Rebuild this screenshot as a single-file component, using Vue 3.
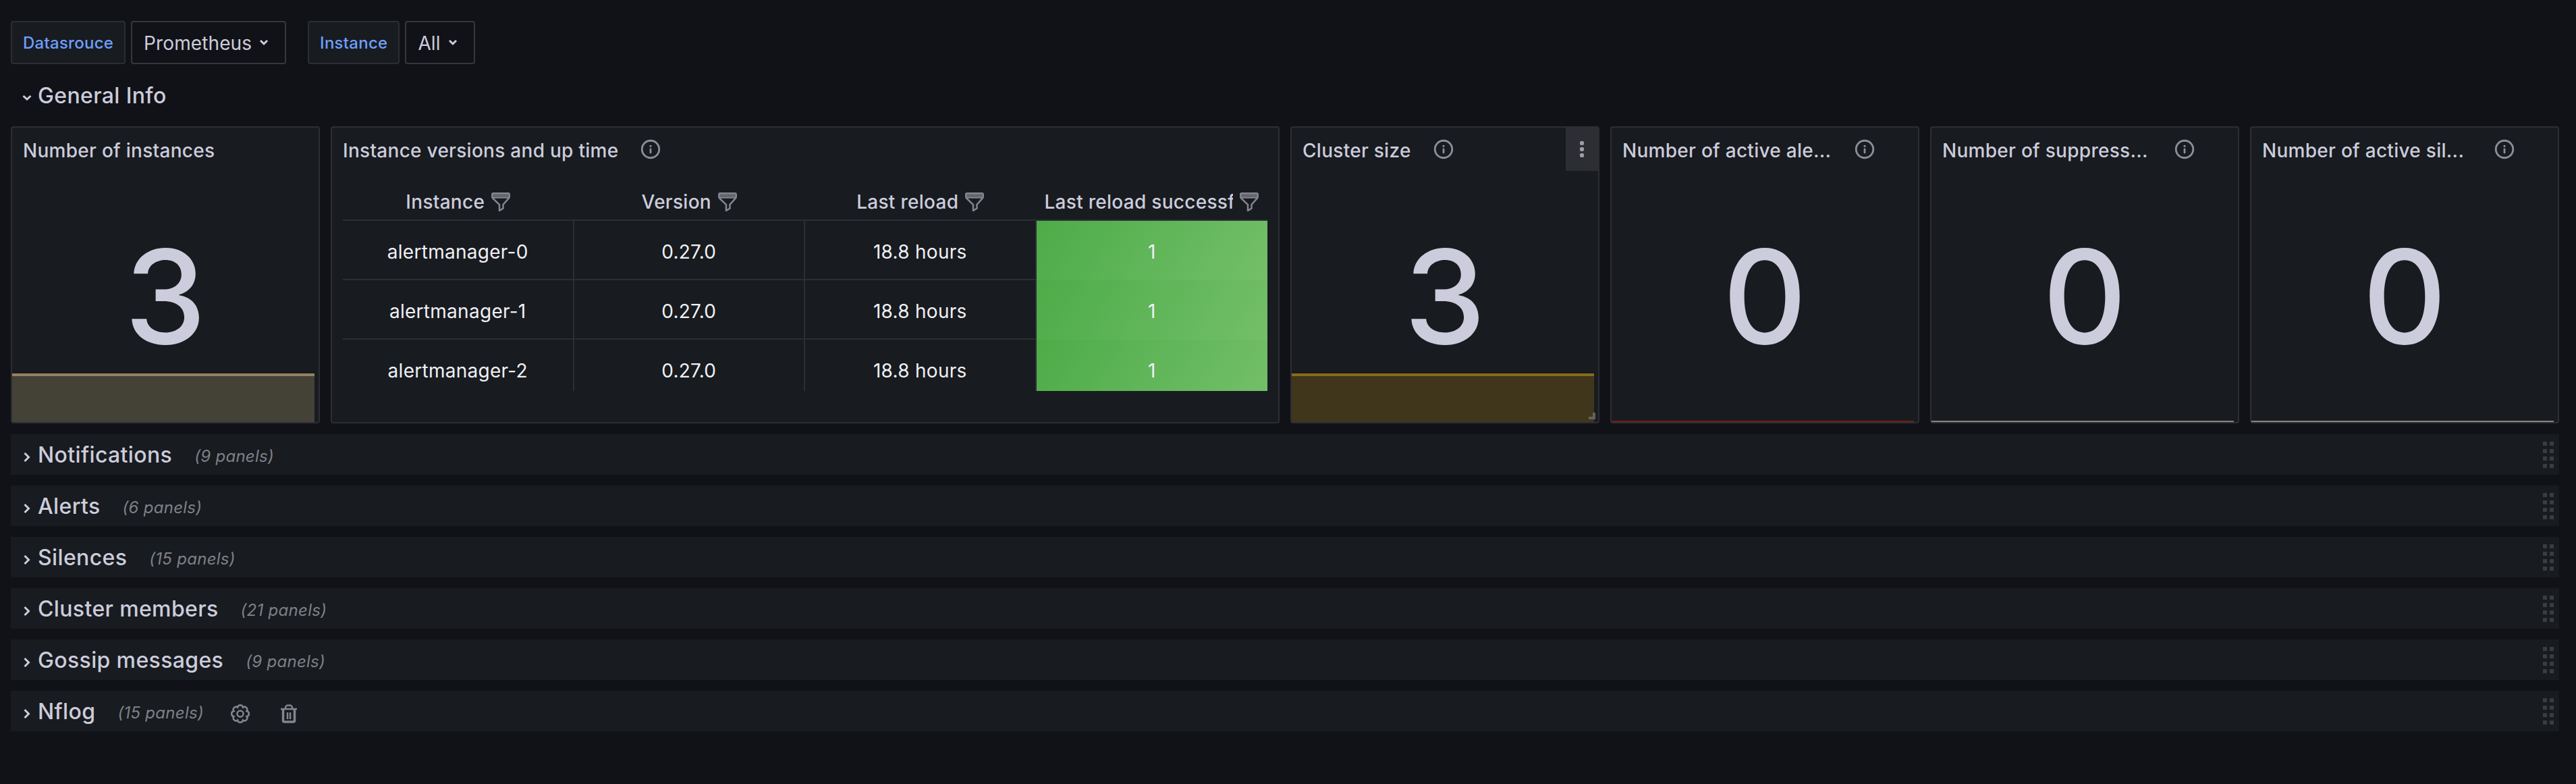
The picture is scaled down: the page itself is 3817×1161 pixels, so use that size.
<script setup>
import { ref } from "vue";

const variables = ref([
  { label: "Datasrouce", value: "Prometheus" },
  { label: "Instance", value: "All" },
]);

const infoPath = "M12 2a10 10 0 1 0 0 20 10 10 0 0 0 0-20Zm0 18a8 8 0 1 1 0-16 8 8 0 0 1 0 16Zm0-9a1 1 0 0 0-1 1v3.5a1 1 0 0 0 2 0v-3.5a1 1 0 0 0-1-1Zm0-3.500a1.200 1.200 0 1 0 0 2.400a1.200 1.200 0 0 0 0-2.400Z";

// Gear outline: eight bumps joined around a circle
const gearPath = (() => {
  let d = "";
  for (let i = 0; i <= 8; i++) {
    const a = ((i * 45 + 22.5) * Math.PI) / 180;
    const x = (14 + 10.3 * Math.cos(a)).toFixed(2);
    const y = (16 + 10.3 * Math.sin(a)).toFixed(2);
    d += i === 0 ? `M${x} ${y}` : `A4 4 0 0 1 ${x} ${y}`;
  }
  return d + "Z";
})();

const columns = ["Instance", "Version", "Last reload", "Last reload successful"];
const instances = ref([
  { name: "alertmanager-0", version: "0.27.0", reload: "18.8 hours", ok: 1 },
  { name: "alertmanager-1", version: "0.27.0", reload: "18.8 hours", ok: 1 },
  { name: "alertmanager-2", version: "0.27.0", reload: "18.8 hours", ok: 1 },
]);

const stats = ref([
  { title: "Number of instances", value: 3, color: "sand" },
  { title: "Cluster size", value: 3, color: "gold", info: true, active: true },
  { title: "Number of active alerts", short: "Number of active ale...", value: 0, color: "red", info: true },
  { title: "Number of suppressed alerts", short: "Number of suppress...", value: 0, color: "grey", info: true },
  { title: "Number of active silences", short: "Number of active sil...", value: 0, color: "grey", info: true },
]);

const rows = ref([
  { title: "Notifications", panels: 9 },
  { title: "Alerts", panels: 6 },
  { title: "Silences", panels: 15 },
  { title: "Cluster members", panels: 21 },
  { title: "Gossip messages", panels: 9 },
  { title: "Nflog", panels: 15, actions: true },
]);
</script>

<template>
  <div class="dashboard">
    <div class="submenu">
      <div class="variable" v-for="v in variables" :key="v.label">
        <label class="variable-label">{{ v.label }}</label>
        <button class="variable-value">
          <span>{{ v.value }}</span>
          <svg class="caret" viewBox="0 0 14 12"><path d="M2 3l5 5 5-5" /></svg>
        </button>
      </div>
    </div>

    <div class="row-open">
      <svg class="chevron" viewBox="0 0 14 12"><path d="M1.500 3l5.500 5 5.500-5" /></svg>
      <span class="row-title">General Info</span>
    </div>

    <div class="panels">
      <section class="panel stat" v-for="(s, i) in stats" :key="s.title" :class="[s.color, { first: i === 0 }]">
        <header class="panel-header">
          <h2 :class="{ truncated: s.short }">{{ s.short || s.title }}</h2>
          <svg v-if="s.info" class="info" viewBox="0 0 24 24"><path :d="infoPath" /></svg>
          <button v-if="s.active" class="menu"><i></i><i></i><i></i></button>
        </header>
        <div class="value">{{ s.value }}</div>
        <div class="spark" :class="{ flat: s.value === 0 }"></div>
        <span v-if="s.active" class="resize"></span>
      </section>

      <section class="panel versions">
        <header class="panel-header">
          <h2>Instance versions and up time</h2>
          <svg class="info" viewBox="0 0 24 24"><path :d="infoPath" /></svg>
        </header>
        <div class="table">
          <div class="tr th">
            <div class="td" v-for="c in columns" :key="c">
              <span class="name">{{ c }}</span>
              <svg class="filter" viewBox="0 0 28 28">
                <path class="band" d="M2 1h24v5H2z" />
                <path d="M3 1.200h22a1.800 1.800 0 0 1 1.800 1.800v3c0 1-.4 1.900-1 2.600L17.500 18v5.500L12 27v-9L2.200 8.600A3.700 3.700 0 0 1 1.200 6V3A1.800 1.800 0 0 1 3 1.200ZM2 7.500h24" />
              </svg>
            </div>
          </div>
          <div class="tbody">
            <div class="tr" v-for="r in instances" :key="r.name">
              <div class="td">{{ r.name }}</div>
              <div class="td">{{ r.version }}</div>
              <div class="td">{{ r.reload }}</div>
              <div class="td ok">{{ r.ok }}</div>
            </div>
          </div>
        </div>
      </section>
    </div>

    <div class="row" v-for="r in rows" :key="r.title">
      <svg class="chevron" viewBox="0 0 10 18"><path d="M1.500 3l6 6-6 6" /></svg>
      <span class="row-title">{{ r.title }}</span>
      <span class="count">({{ r.panels }} panels)</span>
      <template v-if="r.actions">
        <svg class="gear" viewBox="0 0 28 32">
          <path :d="gearPath" />
          <circle cx="14" cy="16" r="4.500" />
        </svg>
        <svg class="trash" viewBox="0 0 24 32">
          <path d="M0 9h24M7 8V7a3.500 3.500 0 0 1 3.500-3.500h3A3.500 3.500 0 0 1 17 7v1M10 14v10M14 14v10" />
          <path class="bin" d="M3.500 9v17a2 2 0 0 0 2 2h13a2 2 0 0 0 2-2V9" />
        </svg>
      </template>
      <div class="drag"><i v-for="n in 8" :key="n"></i></div>
    </div>
  </div>
</template>

<style>
body {
  background: #111217;
}
</style>

<style scoped>
.dashboard {
  box-sizing: border-box;
  width: 3808px;
  height: 1161px;
  padding: 31px 16px 0;
  background: #111217;
  color: #ccccdc;
  font-family: Inter, "Liberation Sans", sans-serif;
  font-size: 28px;
  line-height: 44px;
  letter-spacing: 0.28px;
}
.dashboard * {
  box-sizing: border-box;
}
svg {
  flex: none;
  fill: none;
  stroke: currentColor;
  stroke-width: 2.5;
}
button {
  padding: 0;
  border: 0;
  color: inherit;
  font: inherit;
  letter-spacing: inherit;
}
.submenu {
  display: flex;
  gap: 32px;
  height: 64px;
}
.variable {
  display: flex;
  gap: 8px;
}
.variable-label,
.variable-value {
  display: flex;
  align-items: center;
  height: 64px;
  padding: 2px 16px 0;
  border: 2px solid #2d2e34;
  border-radius: 4px;
}
.variable-label {
  background: #181b1f;
  color: #6e9fff;
  font-size: 24px;
  font-weight: 500;
  letter-spacing: 0.26px;
}
.variable-value {
  background: #111217;
  border-color: #36373d;
  padding: 2px 24px 0 17px;
  letter-spacing: 0.1px;
}
.caret,
.row-open .chevron {
  width: 14px;
  height: 12px;
  stroke-width: 3;
}
.caret {
  margin-left: 11px;
  margin-top: -2px;
}

.row-open {
  display: flex;
  align-items: center;
  height: 60px;
  margin-top: 16px;
  padding-left: 17px;
}
.row-open .chevron {
  margin-top: 7px;
  margin-right: 9px;
}
.row-title {
  padding-top: 2px;
  font-size: 32px;
  font-weight: 500;
  letter-spacing: 0.36px;
}

.panels {
  display: grid;
  grid-template-columns: 458px 1406px repeat(4, 458px);
  grid-template-rows: 440px;
  gap: 16px;
  margin-top: 16px;
  margin-bottom: 16px;
}
.panel {
  position: relative;
  display: flex;
  flex-direction: column;
  grid-row: 1;
  border: 2px solid #2d2e34;
  border-radius: 4px;
  background: #181b1f;
}
.first {
  grid-column: 1;
}
.versions {
  grid-column: 2;
}
.panel-header {
  display: flex;
  align-items: center;
  height: 64px;
  padding-left: 16px;
}
h2 {
  margin: 0;
  padding-top: 3px;
  font-size: 28px;
  font-weight: 500;
  white-space: nowrap;
}
.truncated {
  width: 311px;
}
.info {
  width: 34px;
  height: 34px;
  margin-left: 31px;
  fill: #8e8e9a;
  stroke: none;
}
.menu {
  display: flex;
  flex-direction: column;
  align-items: center;
  justify-content: center;
  gap: 3px;
  width: 48px;
  height: 64px;
  margin-left: auto;
  background: #2d2e33;
}
.menu i {
  width: 6px;
  height: 6px;
  border-radius: 2px;
  background: #9d9daa;
}
.value {
  flex: 1;
  display: flex;
  align-items: center;
  justify-content: center;
  font-size: 193px;
  font-weight: 500;
  letter-spacing: 0;
}
.spark {
  position: absolute;
  left: 0;
  right: 6px;
  bottom: 0;
  height: 72px;
  border-top: 4px solid;
}
.spark.flat {
  height: 2px;
  border-top-width: 2px;
}
.sand .spark {
  background: #444137;
  border-color: #94825f;
}
.gold .spark {
  background: #40361c;
  border-color: #8a6a19;
}
.red .spark {
  border-color: #6e2119;
}
.grey .spark {
  border-color: #8b847b;
}
.resize {
  position: absolute;
  right: 4px;
  bottom: 4px;
  width: 10px;
  height: 10px;
  border: solid #626262;
  border-width: 0 4px 4px 0;
}

.table {
  padding: 0 16px;
}
.tr {
  display: grid;
  grid-template-columns: repeat(4, 342.5px);
  height: 88px;
}
.td {
  display: flex;
  align-items: center;
  justify-content: center;
  min-width: 0;
  padding-top: 5px;
  border-right: 2px solid #2d2e34;
  border-bottom: 2px solid #2d2e34;
  color: #f0f0f5;
}
.th {
  height: 74px;
  padding-top: 16px;
  border-bottom: 2px solid #2d2e34;
}
.th .td {
  padding: 4px 13px 0 12px;
  border: 0;
  color: #ccccdc;
  font-weight: 500;
}
.name {
  overflow: hidden;
  white-space: nowrap;
}
.filter {
  width: 28px;
  height: 28px;
  margin-left: 10px;
  color: #84848f;
}
.band {
  fill: #64656d;
  stroke: none;
}
.tbody {
  height: 252px;
  overflow: hidden;
}
.td.ok {
  border: 0;
  padding-top: 3px;
  background: linear-gradient(120deg, #4dac48, #73bf69);
}

.row {
  display: flex;
  align-items: center;
  height: 60px;
  margin-bottom: 16px;
  padding-left: 19px;
  background: #181b1f;
}
.row .chevron {
  width: 10px;
  height: 18px;
  margin-top: 8px;
  margin-right: 11px;
  stroke-width: 3;
}
.count {
  margin-top: 5px;
  margin-left: 33px;
  color: #7f8088;
  font-size: 24px;
  font-style: italic;
}
.gear,
.trash {
  margin-top: 8px;
  color: #85858f;
}
.gear {
  width: 28px;
  height: 32px;
  margin-left: 40px;
}
.trash {
  width: 24px;
  height: 32px;
  margin-left: 46px;
}
.bin {
  stroke-width: 3.5;
}
.drag {
  display: grid;
  grid-template-columns: 6px 6px;
  gap: 5px 4px;
  margin-left: auto;
  margin-right: 8px;
}
.drag i {
  width: 6px;
  height: 6px;
  background: #3c3c3e;
}
</style>
